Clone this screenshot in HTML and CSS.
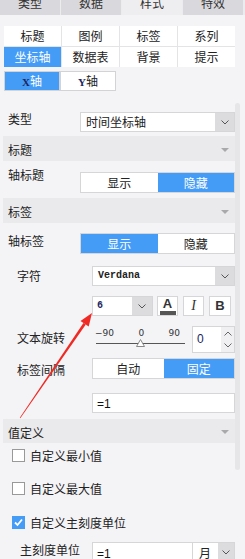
FILE: index.html
```html
<!DOCTYPE html>
<html>
<head>
  <title>坐标轴样式</title>
  <link rel="stylesheet" href="styles.css">
</head>
<body>
  <div class="tabs">
    <div class="tab">类型</div>
    <div class="tab">数据</div>
    <div class="tab active">样式</div>
    <div class="tab">特效</div>
  </div>

  <div class="subnav">
    <div>标题</div>
    <div>图例</div>
    <div>标签</div>
    <div>系列</div>
    <div class="active">坐标轴</div>
    <div>数据表</div>
    <div>背景</div>
    <div>提示</div>
  </div>

  <div class="axis-switch">
    <div class="axis active"><span class="mono letter">X</span>轴</div>
    <div class="axis"><span class="mono letter">Y</span>轴</div>
  </div>

  <div class="scroll">
    <div class="content">
      <div class="row row-type">
        <div class="label">类型</div>
        <div class="select">
          <div class="value">时间坐标轴</div>
          <div class="caret"><svg width="8" height="5" viewBox="0 0 8 5"><path d="M0.5 0.5 L4 4 L7.5 0.5" fill="none" stroke="#555" stroke-width="1"/></svg></div>
        </div>
      </div>

      <div class="section section-title"><span>标题</span><i class="tri"></i></div>

      <div class="row row-title">
        <div class="label">轴标题</div>
        <div class="toggle">
          <div>显示</div>
          <div class="on">隐藏</div>
        </div>
      </div>

      <div class="section section-label"><span>标签</span><i class="tri"></i></div>

      <div class="row row-show">
        <div class="label">轴标签</div>
        <div class="toggle">
          <div class="on">显示</div>
          <div>隐藏</div>
        </div>
      </div>

      <div class="row sub row-font">
        <div class="label">字符</div>
        <div class="select">
          <div class="value mono">Verdana</div>
          <div class="caret"><svg width="8" height="5" viewBox="0 0 8 5"><path d="M0.5 0.5 L4 4 L7.5 0.5" fill="none" stroke="#555" stroke-width="1"/></svg></div>
        </div>
      </div>

      <div class="row sub row-size">
        <div class="label"></div>
        <div class="select size">
          <div class="value mono">6</div>
          <div class="caret"><svg width="8" height="5" viewBox="0 0 8 5"><path d="M0.5 0.5 L4 4 L7.5 0.5" fill="none" stroke="#555" stroke-width="1"/></svg></div>
        </div>
        <div class="btn btn-color"><span>A</span><i></i></div>
        <div class="btn btn-italic">I</div>
        <div class="btn btn-bold">B</div>
      </div>

      <div class="row sub row-rotate">
        <div class="label">文本旋转</div>
        <div class="slider">
          <div class="scale"><span>−90</span><span>0</span><span>90</span></div>
          <div class="track">
            <svg class="knob" width="9" height="8" viewBox="0 0 9 8"><path d="M4.5 0.5 L8.5 7.5 L0.5 7.5 Z" fill="#fff" stroke="#888" stroke-width="1"/></svg>
          </div>
        </div>
        <div class="spin">
          <div class="value">0</div>
          <div class="arrows">
            <svg width="8" height="5" viewBox="0 0 8 5"><path d="M0.5 4.5 L4 1 L7.5 4.5" fill="none" stroke="#666" stroke-width="1"/></svg>
            <svg width="8" height="5" viewBox="0 0 8 5"><path d="M0.5 0.5 L4 4 L7.5 0.5" fill="none" stroke="#666" stroke-width="1"/></svg>
          </div>
        </div>
      </div>

      <div class="row sub row-gap">
        <div class="label">标签间隔</div>
        <div class="toggle">
          <div>自动</div>
          <div class="on">固定</div>
        </div>
      </div>

      <div class="row sub row-expr">
        <div class="label"></div>
        <div class="input"><span class="expr">=1</span></div>
      </div>

      <div class="section section-value"><span>值定义</span><i class="tri"></i></div>

      <div class="check check-min"><i class="box"></i>自定义最小值</div>
      <div class="check check-max"><i class="box"></i>自定义最大值</div>
      <div class="check check-unit">
        <i class="box checked"><svg width="11" height="11" viewBox="0 0 11 11"><path d="M2 5.5 L4.5 8 L9 2.5" fill="none" stroke="#fff" stroke-width="1.8"/></svg></i>自定义主刻度单位
      </div>

      <div class="row row-unit">
        <div class="label">主刻度单位</div>
        <div class="input unit-input"><span class="expr">=1</span></div>
        <div class="select month">
          <div class="value">月</div>
          <div class="caret"><svg width="8" height="5" viewBox="0 0 8 5"><path d="M0.5 0.5 L4 4 L7.5 0.5" fill="none" stroke="#555" stroke-width="1"/></svg></div>
        </div>
      </div>
    </div>

    <div class="scrollbar"><div class="thumb"></div></div>
  </div>

  <!-- red pointer drawn over the panel -->
  <svg class="pointer" width="245" height="559" viewBox="0 0 245 559">
    <path d="M83.4 322.9 L85.8 324.5 L20.3 418.2 L19.8 417.8 Z" fill="#ef2a24"/>
    <path d="M92 313 L80.5 320.9 L88.7 326.5 Z" fill="#ef2a24"/>
  </svg>
</body>
</html>
```

FILE: styles.css
```css
body {
  margin: 0;
  width: 245px;
  height: 559px;
  overflow: hidden;
  position: relative;
  background-color: #f4f4f7;
  font-family: "Noto Sans CJK SC", sans-serif;
  font-size: 12px;
  color: #222;
}

.mono {
  font-family: "Liberation Mono", monospace;
  font-weight: bold;
  font-size: 10px;
}

/* top tabs */
.tabs {
  display: flex;
  gap: 1px;
  height: 15px;
  overflow: hidden;
  background-color: #ececef;
}

.tab {
  width: 60px;
  margin-top: -4px;
  background-color: #d9d9dd;
  color: #333;
  text-align: center;
  line-height: 14px;
}

.tab.active {
  background-color: #eeeef1;
}

/* style sub navigation */
.subnav {
  display: grid;
  grid-template-columns: repeat(4, 57px);
  gap: 1px;
  width: 231px;
  margin: 11px 0 0 4px;
  background-color: #e4e4e7;
}

.subnav div {
  height: 20px;
  line-height: 20px;
  text-align: center;
  background-color: #fff;
}

.subnav .active {
  background-color: #459cf6;
  color: #fff;
}

.axis-switch {
  display: flex;
  margin: 4px 0 0 4px;
}

.axis {
  width: 56px;
  height: 20px;
  box-sizing: border-box;
  border: 1px solid #d3d3d6;
  background-color: #fff;
  text-align: center;
  line-height: 18px;
}

.axis.active {
  background-color: #459cf6;
  color: #fff;
}

.axis .letter {
  color: #1c2660;
  font-family: "Liberation Serif", serif;
  font-size: 11px;
}

/* scrolling panel */
.scroll {
  display: flex;
  height: 459px;
  margin-top: 9px;
  overflow: hidden;
}

.content {
  width: 235px;
  flex-shrink: 0;
}

.scrollbar {
  width: 10px;
}

.scrollbar .thumb {
  width: 5px;
  height: 367px;
  margin-top: 3px;
  border-radius: 3px;
  background-color: #e6e6e9;
}

.row {
  display: flex;
  align-items: flex-start;
  padding-left: 8px;
}

.row .label {
  width: 72px;
  flex-shrink: 0;
  line-height: 14px;
}

.row.sub {
  padding-left: 17px;
}

.row.sub .label {
  width: 75px;
}

.select {
  flex: 1;
  display: flex;
  height: 20px;
  box-sizing: border-box;
  border: 1px solid #d6d6d9;
  background-color: #fff;
}

.select .value {
  flex: 1;
  padding-left: 5px;
  line-height: 18px;
}

.select .caret {
  width: 19px;
  display: flex;
  align-items: center;
  justify-content: center;
  background-color: #dcdcdf;
}

.toggle {
  flex: 1;
  display: flex;
  height: 21px;
  box-sizing: border-box;
  border: 1px solid #d6d6d9;
  background-color: #fff;
}

.toggle div {
  flex: 1;
  text-align: center;
  line-height: 19px;
}

.toggle .on {
  background-color: #459cf6;
  color: #fff;
}

.input {
  flex: 1;
  height: 20px;
  box-sizing: border-box;
  border: 1px solid #d6d6d9;
  background-color: #fff;
  padding-left: 4px;
  line-height: 18px;
}

.expr {
  font-family: "Liberation Sans", sans-serif;
  font-size: 12px;
  color: #111;
}

.section {
  display: flex;
  align-items: center;
  justify-content: space-between;
  height: 25px;
  margin-left: 3px;
  padding: 2px 6px 0 5px;
  box-sizing: border-box;
  background-color: #eaeaec;
}

.section .tri {
  width: 0;
  height: 0;
  border-left: 4px solid transparent;
  border-right: 4px solid transparent;
  border-top: 4px solid #a9a9ac;
}

/* vertical rhythm */
.row-type { margin-top: 12px; }
.section-title { margin-top: 4px; }
.row-title { margin-top: 11px; }
.row-title .label { margin-top: -4px; }
.section-label { margin-top: 5px; }
.row-show { margin-top: 10px; }
.row-show .label { margin-top: 1px; }
.row-font { margin-top: 12px; }
.row-font .label { line-height: 20px; }
.row-size { margin-top: 10px; }
.row-rotate { margin-top: 10px; }
.row-rotate .label { line-height: 23px; }
.row-gap { margin-top: 5px; }
.row-gap .label { line-height: 24px; }
.row-expr { margin-top: 11px; }
.section-value { margin-top: 6px; height: 24px; }
.row-unit { margin-top: 13px; padding-left: 20px; }
.row-unit .label { line-height: 16px; }

/* font size + style buttons */
.select.size {
  flex: none;
  width: 61px;
}

.select.size .caret {
  width: 20px;
}

.select.size .value {
  padding-left: 4px;
  color: #1c2660;
}

.btn {
  width: 21px;
  height: 20px;
  margin-left: 5px;
  box-sizing: border-box;
  border: 1px solid #d6d6d9;
  background-color: #fff;
  text-align: center;
  line-height: 18px;
  color: #333;
}

.btn-color {
  margin-left: 4px;
  display: flex;
  flex-direction: column;
  align-items: center;
}

.btn-color span {
  font-family: "Liberation Sans", sans-serif;
  font-weight: bold;
  font-size: 13px;
  line-height: 12px;
  margin-top: 1px;
  color: #333;
}

.btn-color i {
  width: 16px;
  height: 4px;
  margin-top: 1px;
  background-color: #555;
}

.btn-italic {
  font-family: "Liberation Serif", serif;
  font-style: italic;
  font-size: 14px;
}

.btn-bold {
  width: 22px;
  font-family: "Liberation Sans", sans-serif;
  font-weight: bold;
  font-size: 13px;
}

/* rotation slider */
.slider {
  width: 93px;
  margin-right: 7px;
  padding-top: 2px;
}

.scale {
  display: flex;
  justify-content: space-between;
  padding: 0 5px 0 3px;
  font-family: "DejaVu Sans", sans-serif;
  font-size: 9px;
  line-height: 10px;
  color: #333;
}

.track {
  position: relative;
  height: 1px;
  margin: 5px 0 0 4px;
  background-color: #555;
}

.track .knob {
  position: absolute;
  left: 40px;
  top: -4px;
}

.spin {
  width: 43px;
  height: 27px;
  display: flex;
  box-sizing: border-box;
  border: 1px solid #d6d6d9;
  background-color: #fff;
}

.spin .value {
  flex: 1;
  padding-left: 4px;
  line-height: 25px;
  font-family: "Liberation Sans", sans-serif;
  font-size: 12px;
  color: #1c2660;
}

.spin .arrows {
  width: 13px;
  display: flex;
  flex-direction: column;
  justify-content: space-around;
  align-items: center;
  background-color: #f0f0f2;
}

/* checkboxes */
.check {
  display: flex;
  align-items: center;
  gap: 5px;
  height: 14px;
  padding-left: 12px;
}

.check .box {
  width: 13px;
  height: 13px;
  box-sizing: border-box;
  border: 1px solid #999;
  background-color: #fff;
}

.check .box.checked {
  border-color: #459cf6;
  background-color: #459cf6;
  display: flex;
  align-items: center;
  justify-content: center;
}

.check-min { margin-top: 5px; }
.check-max { margin-top: 19px; }
.check-unit { margin-top: 20px; }

.unit-input {
  flex: none;
  width: 101px;
}

.select.month {
  flex: none;
  width: 42px;
  height: 21px;
  border-left: none;
}

.select.month .value {
  padding-left: 6px;
  line-height: 19px;
}

.unit-input {
  height: 21px;
  line-height: 19px;
}

.select.month .caret {
  width: 16px;
}

.pointer {
  position: absolute;
  left: 0;
  top: 0;
  pointer-events: none;
}
```
